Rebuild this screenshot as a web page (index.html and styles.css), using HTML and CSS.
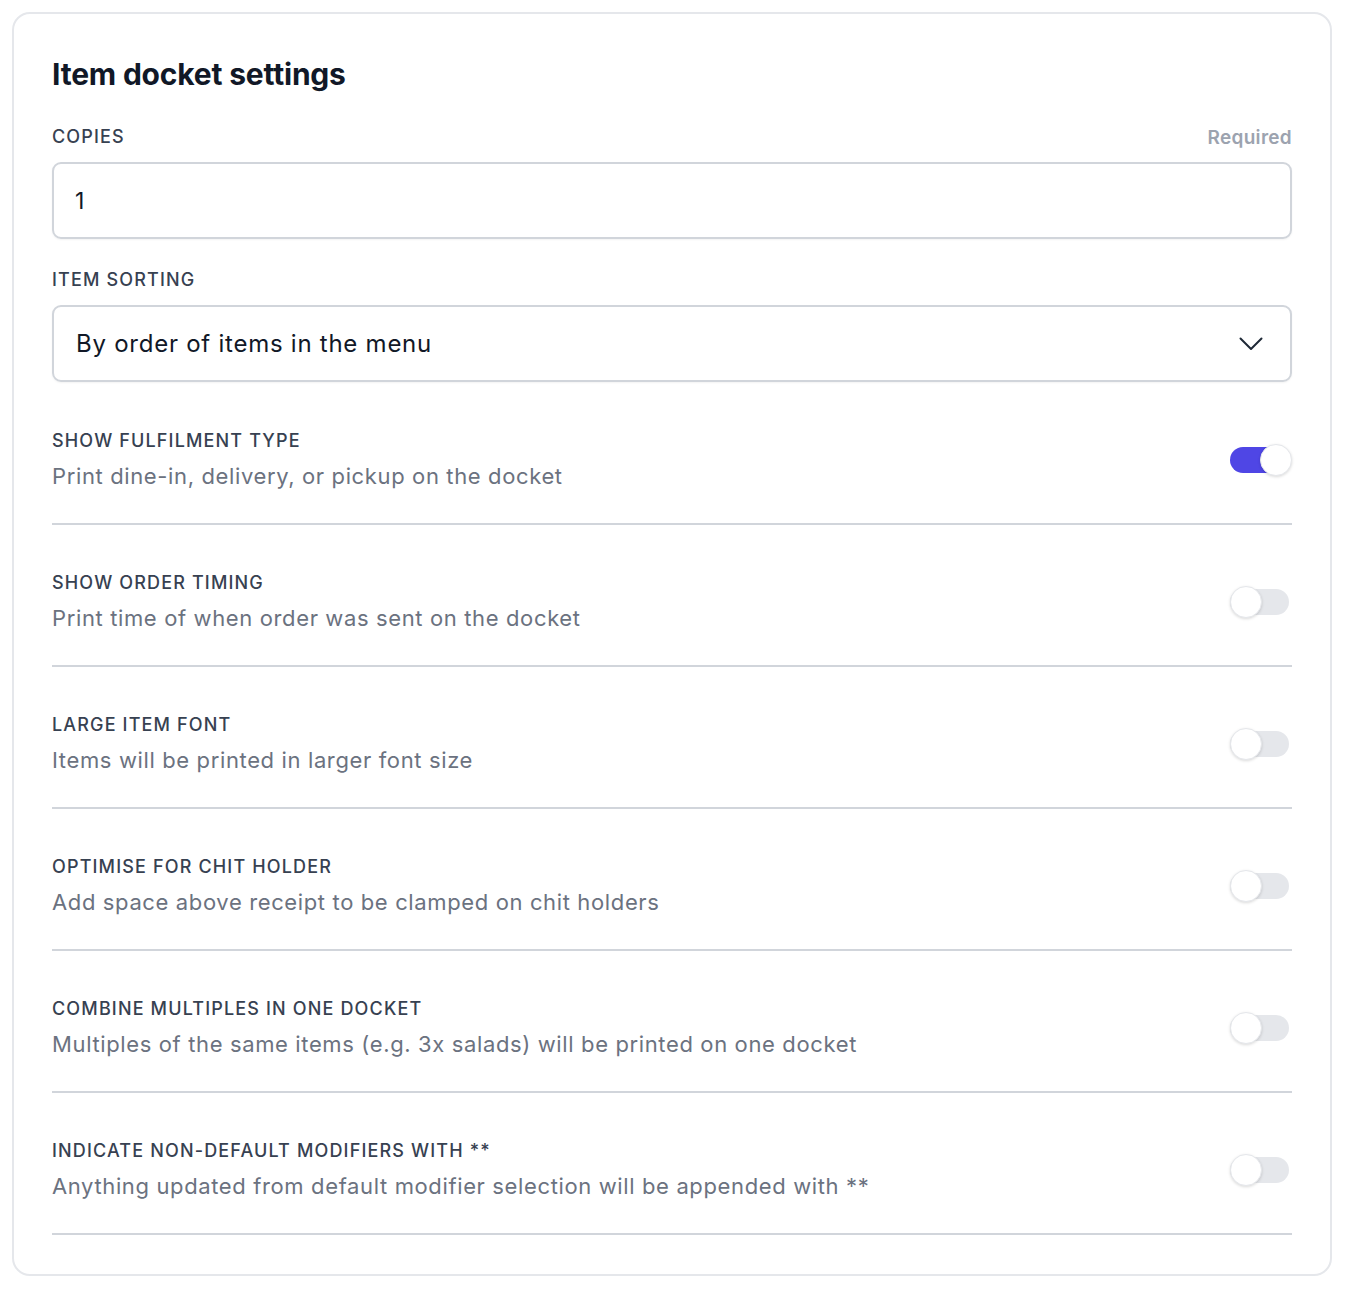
FILE: index.html
```html
<!DOCTYPE html>
<html>
<head>
<meta charset="utf-8">
<link rel="stylesheet" href="styles.css">
</head>
<body>
<div class="card">
  <h1 class="title">Item docket settings</h1>

  <div class="field">
    <div class="label-row">
      <span class="label">COPIES</span>
      <span class="required">Required</span>
    </div>
    <div class="input">1</div>
  </div>

  <div class="field">
    <div class="label-row">
      <span class="label">ITEM SORTING</span>
    </div>
    <div class="input select">
      <span>By order of items in the menu</span>
      <svg class="chev" width="24" height="14" viewBox="0 0 24 14"><path d="M1.5 1.5 L12 12 L22.5 1.5" fill="none" stroke="#1f2937" stroke-width="2" stroke-linecap="round" stroke-linejoin="round"/></svg>
    </div>
  </div>

  <div class="toggles">
    <div class="trow">
      <div class="ttext">
        <div class="label">SHOW FULFILMENT TYPE</div>
        <div class="desc">Print dine-in, delivery, or pickup on the docket</div>
      </div>
      <div class="switch on"><span class="knob"></span></div>
    </div>
    <div class="trow">
      <div class="ttext">
        <div class="label">SHOW ORDER TIMING</div>
        <div class="desc">Print time of when order was sent on the docket</div>
      </div>
      <div class="switch"><span class="knob"></span></div>
    </div>
    <div class="trow">
      <div class="ttext">
        <div class="label">LARGE ITEM FONT</div>
        <div class="desc">Items will be printed in larger font size</div>
      </div>
      <div class="switch"><span class="knob"></span></div>
    </div>
    <div class="trow">
      <div class="ttext">
        <div class="label">OPTIMISE FOR CHIT HOLDER</div>
        <div class="desc">Add space above receipt to be clamped on chit holders</div>
      </div>
      <div class="switch"><span class="knob"></span></div>
    </div>
    <div class="trow">
      <div class="ttext">
        <div class="label">COMBINE MULTIPLES IN ONE DOCKET</div>
        <div class="desc">Multiples of the same items (e.g. 3x salads) will be printed on one docket</div>
      </div>
      <div class="switch"><span class="knob"></span></div>
    </div>
    <div class="trow">
      <div class="ttext">
        <div class="label">INDICATE NON-DEFAULT MODIFIERS WITH **</div>
        <div class="desc">Anything updated from default modifier selection will be appended with **</div>
      </div>
      <div class="switch"><span class="knob"></span></div>
    </div>
  </div>
</div>
</body>
</html>
```

FILE: styles.css
```css
* { box-sizing: border-box; }
html, body { margin: 0; background: #ffffff; }
body {
  font-family: Inter, "Noto Sans", "Liberation Sans", sans-serif;
  padding: 12px 22px 28px 12px;
  color: #111827;
}
.card {
  border: 2px solid #e5e7eb;
  border-radius: 18px;
  padding: 38px 38px 39px 38px;
  background: #fff;
}
.title {
  margin: 0;
  font-size: 30px;
  font-weight: 700;
  line-height: 44px;
  color: #111827;
  letter-spacing: -0.2px;
}
.field { margin-top: 30px; }
.label-row {
  display: flex;
  justify-content: space-between;
  align-items: center;
  height: 22px;
  margin-bottom: 14px;
}
.label {
  font-size: 18px;
  font-weight: 500;
  letter-spacing: 1.15px;
  color: #374151;
  line-height: 22px;
}
.required {
  font-size: 19px;
  font-weight: 600;
  color: #9ca3af;
  letter-spacing: 0.3px;
}
.input {
  height: 77px;
  border: 2px solid #d1d5db;
  border-radius: 9px;
  padding: 0 21px;
  display: flex;
  align-items: center;
  font-size: 23px;
  color: #111827;
  box-shadow: 0 1px 2px rgba(0,0,0,0.05);
}
.select {
  justify-content: space-between;
  padding: 0 27px 0 22px;
  font-size: 24px;
  letter-spacing: 0.75px;
}
.chev { display: block; }
.toggles { margin-top: 48px; }
.trow {
  display: flex;
  align-items: center;
  justify-content: space-between;
  padding: 47px 0 33px 0;
  border-bottom: 2px solid #d1d5db;
}
.toggles .trow:first-child { padding-top: 0; }
.ttext { display: flex; flex-direction: column; }
.trow .label { line-height: 22px; }
.desc {
  margin-top: 10px;
  font-size: 22px;
  color: #6b7280;
  letter-spacing: 0.63px;
  line-height: 28px;
}
.switch {
  position: relative;
  width: 59px;
  height: 26px;
  margin-right: 3px;
  border-radius: 13px;
  background: #e5e7eb;
  flex: none;
}
.switch.on { background: #4f46e5; }
.knob {
  position: absolute;
  top: -3px;
  left: 0;
  width: 32px;
  height: 32px;
  border-radius: 50%;
  background: #fff;
  border: 1px solid #e5e7eb;
  box-shadow: 0 1px 3px rgba(0,0,0,0.15);
}
.switch.on .knob { left: 30px; }
```
